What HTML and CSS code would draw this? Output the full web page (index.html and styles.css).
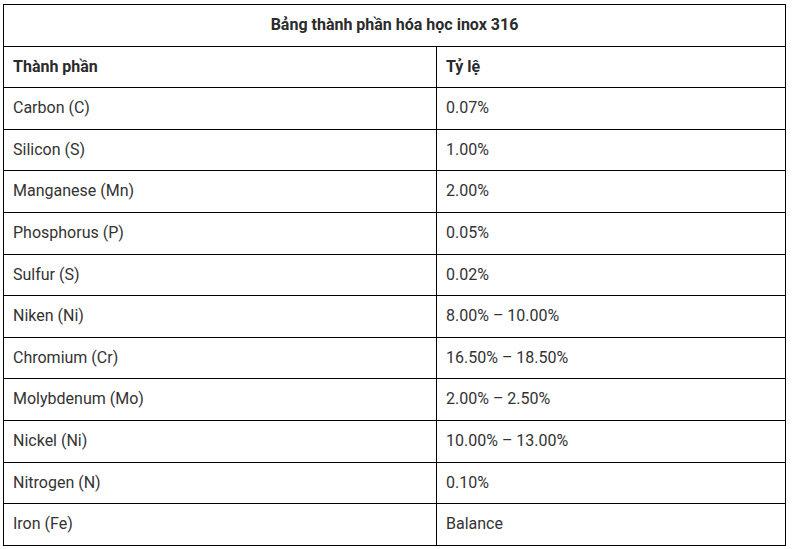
FILE: index.html
```html
<!DOCTYPE html>
<html lang="vi">
<head>
<meta charset="utf-8">
<title>Bảng thành phần hóa học inox 316</title>
<link rel="stylesheet" href="styles.css">
</head>
<body>
<table class="comp">
  <colgroup>
    <col class="col-name">
    <col class="col-val">
  </colgroup>
  <thead>
    <tr><th class="title" colspan="2">Bảng thành phần hóa học inox 316</th></tr>
    <tr><th>Thành phần</th><th>Tỷ lệ</th></tr>
  </thead>
  <tbody>
    <tr><td>Carbon (C)</td><td>0.07%</td></tr>
    <tr><td>Silicon (S)</td><td>1.00%</td></tr>
    <tr><td>Manganese (Mn)</td><td>2.00%</td></tr>
    <tr><td>Phosphorus (P)</td><td>0.05%</td></tr>
    <tr><td>Sulfur (S)</td><td>0.02%</td></tr>
    <tr><td>Niken (Ni)</td><td>8.00% – 10.00%</td></tr>
    <tr><td>Chromium (Cr)</td><td>16.50% – 18.50%</td></tr>
    <tr><td>Molybdenum (Mo)</td><td>2.00% – 2.50%</td></tr>
    <tr><td>Nickel (Ni)</td><td>10.00% – 13.00%</td></tr>
    <tr><td>Nitrogen (N)</td><td>0.10%</td></tr>
    <tr><td>Iron (Fe)</td><td>Balance</td></tr>
  </tbody>
</table>
</body>
</html>
```

FILE: styles.css
```css
html, body {
  margin: 0;
  padding: 0;
  background: #fff;
}

body {
  font-family: Roboto, "Liberation Sans", Arial, sans-serif;
  font-size: 16px;
  color: #333;
}

.comp {
  margin: 4px 0 0 3px;
  width: 783px;
  table-layout: fixed;
  border-collapse: separate;
  border-spacing: 0;
  border-top: 1px solid #000;
  border-left: 1px solid #000;
}

.col-name {
  width: 433px;
}

.col-val {
  width: 349px;
}

.comp th,
.comp td {
  box-sizing: border-box;
  padding: 8px 9px;
  line-height: 24.6px;
  text-align: left;
  vertical-align: middle;
  border-right: 1px solid #000;
  border-bottom: 1px solid #000;
}

.comp th {
  font-weight: 700;
  color: #2b2b2b;
}

.comp th.title {
  text-align: center;
}
```
